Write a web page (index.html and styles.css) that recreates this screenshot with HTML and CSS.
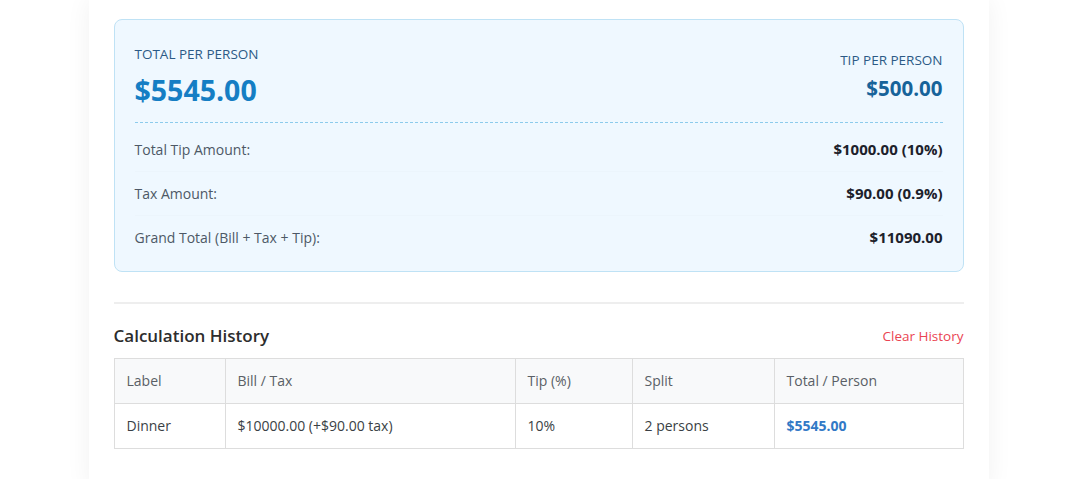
FILE: index.html
```html
<!DOCTYPE html>
<html lang="en">
<head>
    <meta charset="UTF-8">
    <meta name="viewport" content="width=device-width, initial-scale=1.0">
    <title>Tip Calculator</title>
    <link rel="stylesheet" href="styles.css">
</head>
<body>
    <div class="calculator">
        <div class="result-card">
            <div class="result-top">
                <div class="per-person">
                    <div class="result-label">Total per person</div>
                    <div class="big-amount">$5545.00</div>
                </div>
                <div class="tip-person">
                    <div class="result-label">Tip per person</div>
                    <div class="tip-amount">$500.00</div>
                </div>
            </div>

            <div class="breakdown">
                <div class="breakdown-row">
                    <span>Total Tip Amount:</span>
                    <strong>$1000.00 (10%)</strong>
                </div>
                <div class="breakdown-row">
                    <span>Tax Amount:</span>
                    <strong>$90.00 (0.9%)</strong>
                </div>
                <div class="breakdown-row">
                    <span>Grand Total (Bill + Tax + Tip):</span>
                    <strong>$11090.00</strong>
                </div>
            </div>
        </div>

        <div class="history">
            <div class="history-header">
                <h3>Calculation History</h3>
                <button class="clear-btn">Clear History</button>
            </div>

            <table class="history-table">
                <colgroup>
                    <col style="width: 111px">
                    <col style="width: 290px">
                    <col style="width: 117px">
                    <col style="width: 142px">
                    <col>
                </colgroup>
                <thead>
                    <tr>
                        <th>Label</th>
                        <th>Bill / Tax</th>
                        <th>Tip (%)</th>
                        <th>Split</th>
                        <th>Total / Person</th>
                    </tr>
                </thead>
                <tbody>
                    <tr>
                        <td>Dinner</td>
                        <td>$10000.00 (+$90.00 tax)</td>
                        <td>10%</td>
                        <td>2 persons</td>
                        <td class="total-cell">$5545.00</td>
                    </tr>
                </tbody>
            </table>
        </div>
    </div>
</body>
</html>
```

FILE: styles.css
```css
body {
    margin: 0;
    background: #ffffff;
    font-family: "Segoe UI", "Open Sans", "Noto Sans", sans-serif;
    color: #333;
}

.calculator {
    width: 850px;
    margin: 0 auto;
    padding: 19px 25px 40px;
    background: #fff;
    box-shadow: 0 0 24px rgba(0, 0, 0, 0.06);
    position: relative;
    left: -3px;
}

.result-card {
    background: #eff8ff;
    border: 1px solid #bfe2f5;
    border-radius: 8px;
    padding: 24px 20px 12px;
}

.result-top {
    display: flex;
    justify-content: space-between;
    align-items: center;
    padding-bottom: 14px;
    border-bottom: 1px dashed #8ccbec;
}

.result-label {
    font-size: 13.5px;
    line-height: 20px;
    text-transform: uppercase;
    color: #2c5a86;
}

.big-amount {
    margin-top: 8px;
    font-size: 28.5px;
    line-height: 36px;
    font-weight: 700;
    color: #157ec4;
}

.tip-person {
    text-align: right;
}

.tip-amount {
    margin-top: 4px;
    font-size: 20.5px;
    line-height: 28px;
    font-weight: 700;
    color: #17639a;
}

.breakdown {
    margin-top: 5px;
}

.breakdown-row {
    display: flex;
    justify-content: space-between;
    align-items: center;
    padding: 11px 0;
    font-size: 14px;
    line-height: 21px;
    color: #4d5866;
    border-bottom: 1px solid #ecf5fc;
}

.breakdown-row:last-child {
    border-bottom: none;
}

.breakdown-row strong {
    font-size: 15px;
    color: #1c212b;
}

.history {
    margin-top: 30px;
    padding-top: 20px;
    border-top: 2px solid #eeeeee;
}

.history-header {
    display: flex;
    justify-content: space-between;
    align-items: center;
    margin-bottom: 11px;
}

.history-header h3 {
    margin: 0;
    font-size: 17px;
    line-height: 23px;
    font-weight: 600;
    color: #2d2d2d;
}

.clear-btn {
    padding: 0;
    border: none;
    background: none;
    font-family: inherit;
    font-size: 13.5px;
    color: #ea4452;
    cursor: pointer;
}

.history-table {
    width: 100%;
    border-collapse: collapse;
    table-layout: fixed;
    font-size: 14px;
}

.history-table th,
.history-table td {
    padding: 12px;
    line-height: 20px;
    text-align: left;
    border: 1px solid #dddddd;
}

.history-table th {
    background: #f8f9fa;
    font-weight: 500;
    color: #5a5f66;
}

.history-table td {
    color: #3a3f45;
}

.history-table .total-cell {
    font-weight: 700;
    color: #3179c6;
}
```
